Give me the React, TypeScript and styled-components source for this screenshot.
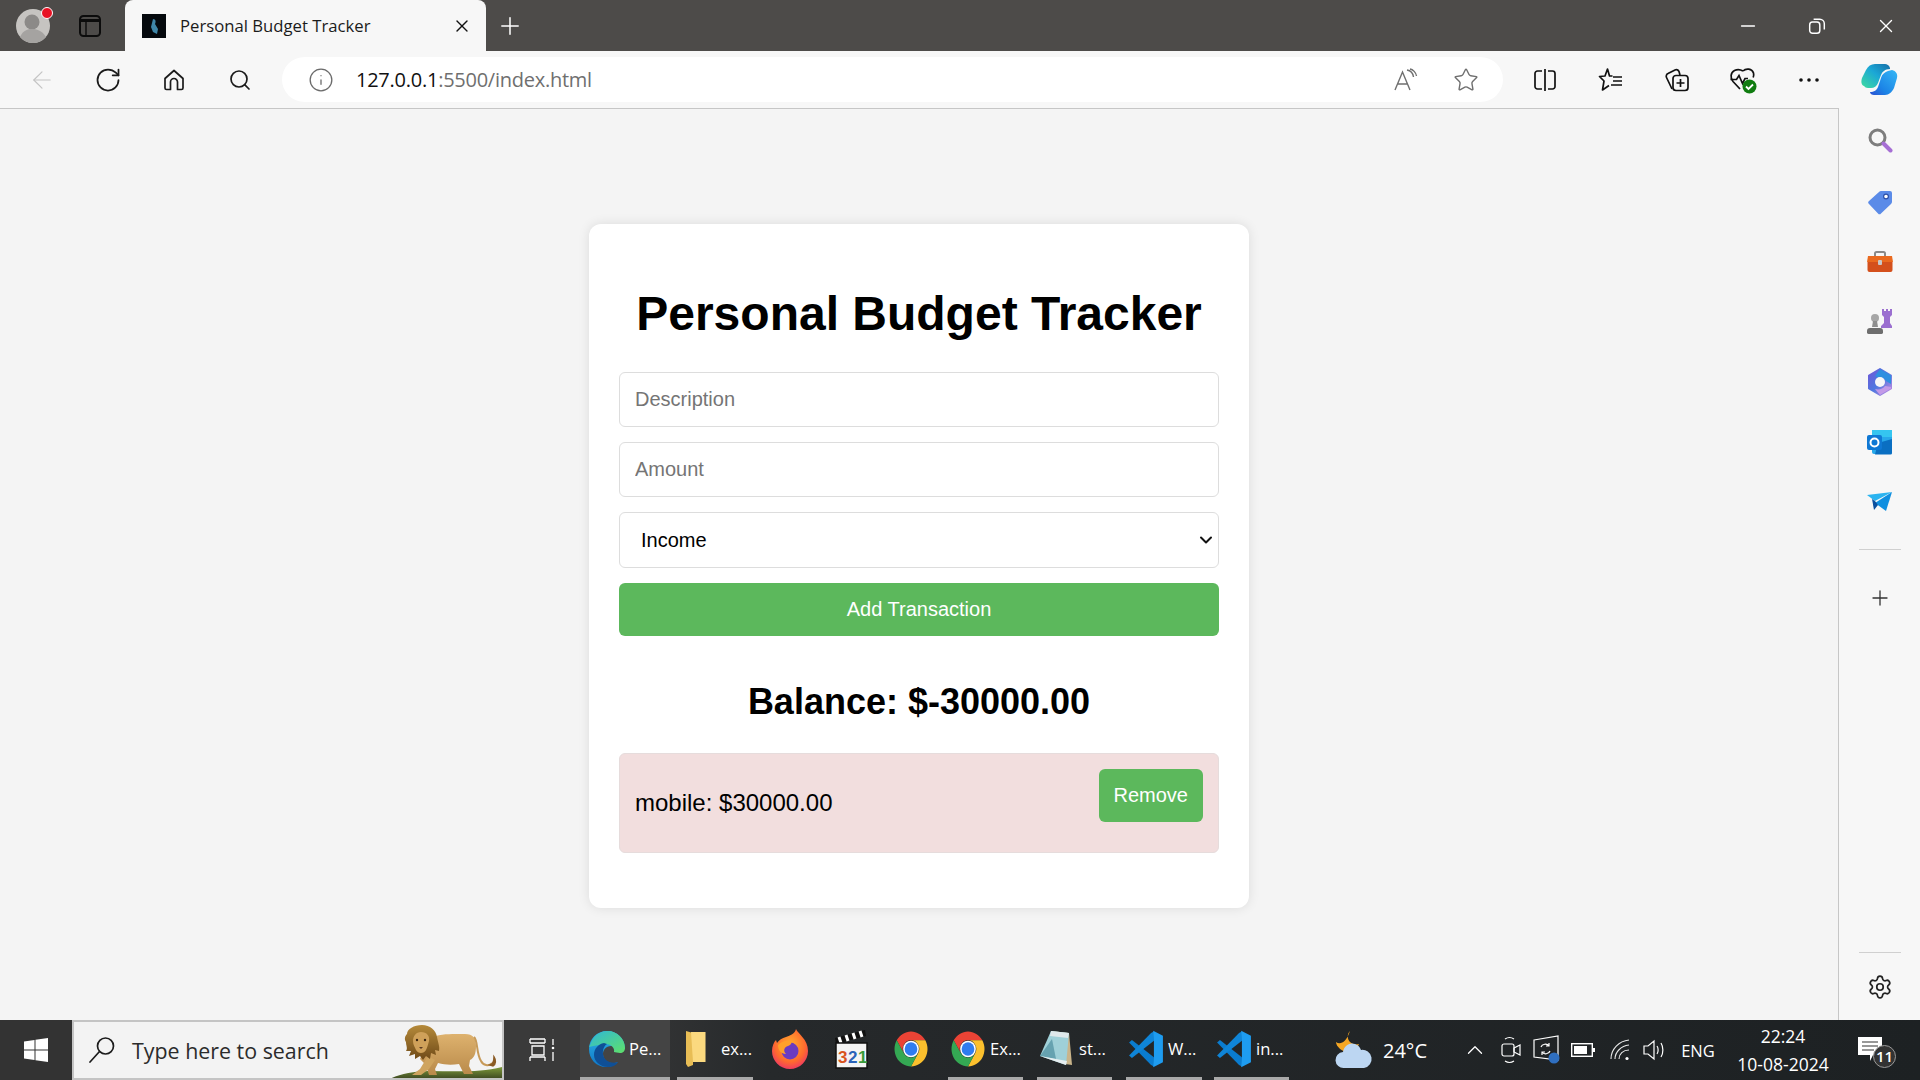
import styled, { createGlobalStyle } from 'styled-components';
import {
  ArrowLeft,
  ChevronDown,
  ChevronUp,
  Info,
  Minus,
  Plus,
  RotateCw,
  Search,
  Settings,
  Star,
  X,
} from 'lucide-react';

const uiFont = `"Open Sans", "Noto Sans", sans-serif`;

const GlobalStyle = createGlobalStyle`
  html, body {
    margin: 0;
    padding: 0;
    height: 100%;
    overflow: hidden;
    background: #f4f4f4;
    font-family: "Liberation Sans", Arial, sans-serif;
  }
`;

const Screen = styled.div`
  width: 1920px;
  height: 1080px;
  display: flex;
  flex-direction: column;
  overflow: hidden;
`;

/* browser tab strip */
const TabStrip = styled.div`
  height: 51px;
  flex: none;
  display: flex;
  align-items: center;
  background: #4d4b49;
`;

const AvatarSlot = styled.div`
  position: relative;
  width: 66px;
  display: flex;
  justify-content: center;
`;

const RedDot = styled.span`
  position: absolute;
  top: -1px;
  left: 41px;
  width: 10px;
  height: 10px;
  border-radius: 50%;
  background: #e81123;
  border: 1px solid #fff;
`;

const TabsButton = styled.div`
  width: 48px;
  margin-right: 11px;
  display: flex;
  justify-content: center;
`;

const Tab = styled.div`
  width: 361px;
  height: 51px;
  box-sizing: border-box;
  padding: 0 14px 0 17px;
  display: flex;
  align-items: center;
  background: #f7f7f7;
  border-radius: 8px 8px 0 0;
  color: #1b1b1b;
  font: 16.7px ${uiFont};
`;

const Favicon = styled.div`
  width: 24px;
  height: 24px;
  margin-right: 14px;
  flex: none;
`;

const TabTitle = styled.span`
  flex: 1;
  white-space: nowrap;
`;

const NewTab = styled.div`
  margin-left: 10px;
  display: flex;
  color: #fff;
`;

const WindowControls = styled.div`
  margin-left: auto;
  display: flex;
  color: #fff;
`;

const WindowButton = styled.div`
  width: 69px;
  display: flex;
  justify-content: center;
  align-items: center;
`;

/* address bar row */
const Toolbar = styled.div`
  height: 57px;
  flex: none;
  display: flex;
  align-items: center;
  padding-left: 9px;
  background: #f7f7f7;
`;

const ToolButton = styled.div<{ $w?: number }>`
  width: ${(p) => p.$w ?? 66}px;
  flex: none;
  display: flex;
  justify-content: center;
  align-items: center;
  color: #1b1b1b;
`;

const AddressBar = styled.div`
  width: 1221px;
  height: 45px;
  margin: 0 9px;
  flex: none;
  box-sizing: border-box;
  padding-left: 26px;
  display: flex;
  align-items: center;
  background: #fff;
  border-radius: 23px;
  color: #6b6b6b;
`;

const Url = styled.div`
  margin-left: 22px;
  font: 20px ${uiFont};
  letter-spacing: -0.25px;
  color: #6f6f6f;
  white-space: nowrap;
  b {
    font-weight: 400;
    color: #111;
  }
`;

const AddressActions = styled.div`
  margin-left: auto;
  margin-right: 24px;
  display: flex;
  align-items: center;
  gap: 34px;
  color: #6f6f6f;
`;

const Workspace = styled.div`
  flex: 1;
  display: flex;
  min-height: 0;
`;

const Viewport = styled.main`
  flex: 1;
  box-sizing: border-box;
  padding-top: 2px;
  display: flex;
  align-items: center;
  justify-content: center;
  background: #f4f4f4;
  border-top: 1px solid #c6c6c6;
  border-right: 1px solid #c6c6c6;
`;

const Sidebar = styled.aside`
  width: 81px;
  flex: none;
  padding-top: 4px;
  box-sizing: border-box;
  display: flex;
  flex-direction: column;
  align-items: center;
  background: #f7f7f7;
`;

const SideIcon = styled.div`
  width: 30px;
  height: 60px;
  display: flex;
  align-items: center;
  justify-content: center;
`;

const LensSlot = styled(SideIcon)`
  margin-top: -2px;
  margin-bottom: 2px;
`;

const SideRule = styled.hr<{ $auto?: boolean }>`
  width: 42px;
  margin: ${(p) => (p.$auto ? 'auto 0 0' : '17px 0 0')};
  border: 0;
  border-top: 1px solid #d0d0d0;
`;

const SideAdd = styled.div`
  margin-top: 36px;
  display: flex;
  color: #333;
`;

const SideSettings = styled.div`
  margin: 21px 0 20px;
  display: flex;
  color: #222;
`;

/* the page itself */
const Card = styled.section`
  width: 660px;
  box-sizing: border-box;
  padding: 30px;
  background: #fff;
  border-radius: 12px;
  box-shadow: 0 0 12px rgba(0, 0, 0, 0.1);
`;

const Title = styled.h1`
  margin: 32px 0 31px;
  font-size: 48px;
  font-weight: 700;
  text-align: center;
  color: #000;
`;

const TextInput = styled.input`
  display: block;
  width: 100%;
  box-sizing: border-box;
  margin-bottom: 15px;
  padding: 15px;
  border: 1px solid #ddd;
  border-radius: 6px;
  background: #fff;
  font: 20px "Liberation Sans", Arial, sans-serif;
  outline: none;
`;

const SelectWrap = styled.div`
  position: relative;
  margin-bottom: 15px;
  color: #111;
`;

const TypeSelect = styled.select`
  display: block;
  width: 100%;
  height: 56px;
  box-sizing: border-box;
  padding: 15px 15px 15px 21px;
  appearance: none;
  border: 1px solid #ddd;
  border-radius: 6px;
  background: #fff;
  color: #000;
  font: 20px "Liberation Sans", Arial, sans-serif;
`;

const SelectArrow = styled(ChevronDown)`
  position: absolute;
  top: 18px;
  right: 3px;
  pointer-events: none;
`;

const GreenButton = styled.button<{ $full?: boolean }>`
  display: block;
  width: ${(p) => (p.$full ? '100%' : 'auto')};
  flex: none;
  box-sizing: border-box;
  padding: 15px 20px;
  border: 0;
  border-radius: 6px;
  background: #5cb85c;
  color: #fff;
  font: 20px/23px "Liberation Sans", Arial, sans-serif;
  cursor: pointer;
`;

const RemoveButton = styled(GreenButton)`
  margin-bottom: 15px;
  padding: 15px;
`;

const Balance = styled.h2`
  margin: 45px 0 30px;
  font-size: 36px;
  font-weight: 700;
  text-align: center;
  color: #000;
`;

const TransactionList = styled.ul`
  margin: 0 0 25px;
  padding: 0;
  list-style: none;
`;

const TransactionRow = styled.li`
  display: flex;
  align-items: center;
  justify-content: space-between;
  padding: 15px;
  background: #f2dede;
  border: 1px solid #e6dcdc;
  border-radius: 6px;
  font-size: 24px;
  color: #000;
`;

/* windows taskbar */
const Taskbar = styled.footer`
  height: 60px;
  flex: none;
  display: flex;
  align-items: stretch;
  background: linear-gradient(90deg, #363636 0%, #3a3a3a 30%, #26292b 40%, #1d2123 100%);
  color: #fff;
  font: 20px ${uiFont};
`;

const StartButton = styled.div`
  width: 72px;
  flex: none;
  display: flex;
  align-items: center;
  justify-content: center;
  background: #333;
`;

const SearchBox = styled.div`
  position: relative;
  width: 432px;
  flex: none;
  box-sizing: border-box;
  padding-left: 14px;
  display: flex;
  align-items: center;
  gap: 16px;
  background: #f3f3f3;
  border: 2px solid #c4c4c4;
  color: #2b2b2b;
  font-size: 21.4px;
  overflow: hidden;
`;

const Lion = styled.svg`
  position: absolute;
  right: 0;
  bottom: -2px;
`;

const TaskView = styled.div`
  width: 76px;
  flex: none;
  display: flex;
  align-items: center;
  justify-content: center;
  background: #3a3a3a;
`;

const TaskApp = styled.div<{ $w: number; $gap?: number; $pad?: number; $open?: boolean; $active?: boolean }>`
  width: ${(p) => p.$w}px;
  margin-left: ${(p) => p.$gap ?? 0}px;
  flex: none;
  box-sizing: border-box;
  padding-left: ${(p) => p.$pad ?? 0}px;
  display: flex;
  align-items: center;
  justify-content: ${(p) => (p.$open ? 'flex-start' : 'center')};
  gap: 4px;
  background: ${(p) => (p.$active ? '#444' : 'transparent')};
  border-bottom: 3px solid ${(p) => (p.$open ? '#a9a9a9' : 'transparent')};
  font-size: 16.6px;
  white-space: nowrap;
  svg {
    flex: none;
  }
`;

const TaskLabel = styled.span<{ $indent?: number }>`
  margin-left: ${(p) => p.$indent ?? 0}px;
`;

const Tray = styled.div`
  margin-left: auto;
  display: flex;
  align-items: center;
  color: #fff;
`;

const TrayItem = styled.div<{ $w: number }>`
  width: ${(p) => p.$w}px;
  flex: none;
  display: flex;
  align-items: center;
  justify-content: center;
`;

const EngLabel = styled.span`
  font-size: 16.5px;
`;

const Weather = styled.div`
  width: 122px;
  display: flex;
  align-items: center;
  gap: 10px;
  font-size: 20px;
`;

const Clock = styled.div`
  width: 116px;
  text-align: center;
  font-size: 17.5px;
  line-height: 28px;
`;

const Notifications = styled.div`
  position: relative;
  width: 57px;
  display: flex;
  justify-content: center;
  margin-right: 22px;
`;

const NotifyBadge = styled.span`
  position: absolute;
  top: 8px;
  left: 32px;
  width: 23px;
  height: 23px;
  box-sizing: border-box;
  border-radius: 50%;
  background: #333;
  border: 1px solid #999;
  font-size: 15px;
  font-weight: 600;
  line-height: 21px;
  text-align: center;
`;

/* drawings */
const Avatar = () => (
  <svg width="36" height="36" viewBox="0 0 36 36">
    <circle cx="18" cy="18" r="17" fill="#c6c4c1" />
    <circle cx="17" cy="14" r="7.5" fill="#8c8a88" />
    <path d="M5 29c3-7 8-8 12-8s10 1 14 8a17 17 0 0 1-26 0z" fill="#a5a3a1" />
  </svg>
);

const TabsIcon = () => (
  <svg width="22" height="22" viewBox="0 0 22 22" fill="none" stroke="#0c0c0c" strokeWidth="2">
    <rect x="1" y="1" width="20" height="20" rx="3.5" />
    <path d="M1 5.500h20" strokeWidth="3" />
    <path d="M7 6v15" strokeWidth="1.400" />
  </svg>
);

const RestoreIcon = () => (
  <svg width="18" height="18" viewBox="0 0 16 16" fill="none" stroke="#fff" strokeWidth="1.300">
    <rect x="1.500" y="4.500" width="9" height="10" rx="2.500" />
    <path d="M5 2h5.500a4 4 0 0 1 4 4v5" />
  </svg>
);

const HomeIcon = () => (
  <svg width="24" height="24" viewBox="0 0 24 24" fill="none" stroke="#1b1b1b" strokeWidth="1.700">
    <path d="M3 10.500 12 2.500l9 8V20a1.500 1.500 0 0 1-1.500 1.500h-4V14a3.500 3.500 0 0 0-7 0v7.500h-4A1.500 1.500 0 0 1 3 20z" strokeLinejoin="round" />
  </svg>
);

const ReadAloudIcon = () => (
  <svg width="26" height="24" viewBox="0 0 26 24" fill="none" stroke="#6f6f6f" strokeWidth="1.400">
    <path d="M2 22 9.500 4 17 22M5 16h9" />
    <path d="M14 2c3 .5 6 3 6.500 7M17 1c3 .5 6 3.500 6.500 7" />
  </svg>
);

const SplitIcon = () => (
  <svg width="24" height="24" viewBox="0 0 24 24" fill="none" stroke="#111" strokeWidth="1.700">
    <path d="M9 3H4.500A2.500 2.500 0 0 0 2 5.500v13A2.500 2.500 0 0 0 4.500 21H9M15 3h4.500A2.500 2.500 0 0 1 22 5.500v13a2.500 2.500 0 0 1-2.500 2.500H15M12 1v22" />
  </svg>
);

const FavoritesIcon = () => (
  <svg width="26" height="26" viewBox="0 0 26 26" fill="none" stroke="#111" strokeWidth="1.700" strokeLinejoin="round">
    <path d="M14.500 9 11.500 9 9.500 2 7 9 1.500 9.500 6 14 4.500 23 11 18.500" />
    <path d="M15 10h9M15 14h9M13 18h11" />
  </svg>
);

const CollectionsIcon = () => (
  <svg width="26" height="26" viewBox="0 0 26 26" fill="none" stroke="#111" strokeWidth="1.700">
    <path d="M8 22 2.500 10.500a3 3 0 0 1 1.500-4L11 3a3 3 0 0 1 4 1.500L16 8" />
    <rect x="9" y="8.500" width="15" height="15" rx="3" />
    <path d="M16.500 12v8M12.500 16h8" />
  </svg>
);

const HealthIcon = () => (
  <svg width="28" height="28" viewBox="0 0 28 28" fill="none">
    <path d="M14 5c3-3 9-2.500 10.500 2 .4 1.500.3 3-.3 4.500M11 23 4 15.500C1 12 1.500 6.500 5.500 4.500 8.500 3 11.500 3.500 14 5" stroke="#111" strokeWidth="1.700" />
    <path d="M1.500 13.500h6l2.500-4 3.500 8 2.500-5h3" stroke="#111" strokeWidth="1.700" />
    <circle cx="20.500" cy="20.500" r="7" fill="#107c10" />
    <path d="m17 20.500 2.500 2.500 4.500-4.500" stroke="#fff" strokeWidth="1.800" />
  </svg>
);

const DotsIcon = () => (
  <svg width="20" height="4" viewBox="0 0 20 4" fill="#111">
    <circle cx="2" cy="2" r="1.800" />
    <circle cx="10" cy="2" r="1.800" />
    <circle cx="18" cy="2" r="1.800" />
  </svg>
);

const CopilotIcon = () => (
  <svg width="37" height="31" viewBox="0 0 37 31">
    <defs>
      <linearGradient id="copA" x1="0" y1="1" x2="1" y2="0">
        <stop offset="0" stopColor="#3fdc9e" />
        <stop offset="0.55" stopColor="#1ba7d6" />
        <stop offset="1" stopColor="#176fa8" />
      </linearGradient>
      <linearGradient id="copB" x1="1" y1="0" x2="0" y2="1">
        <stop offset="0" stopColor="#35b7f5" />
        <stop offset="0.65" stopColor="#1c84e6" />
        <stop offset="1" stopColor="#2b4fd1" />
      </linearGradient>
    </defs>
    <path d="M31 6c4 1 6 4 5 8l-3 10c-2 4-5 7-9 7H13c-2 0-4-1-4-3 4 0 7-2 8-5l3-9c1-4 4-6 7-7z" fill="url(#copB)" />
    <path d="M3 22C0 21 0 17 1 14l4-8c2-4 5-6 9-6h10c2 0 4 1 5 4v1c-5 0-8 3-9 6l-3 8c-1 3-4 5-7 5H7c-2 0-3-1-4-2z" fill="url(#copA)" />
  </svg>
);

const SideLens = () => (
  <svg width="26" height="26" viewBox="0 0 26 26" fill="none">
    <circle cx="10.500" cy="10.500" r="7.500" stroke="#7d7d7d" strokeWidth="3" />
    <path d="m16.500 16.500 7 7" stroke="#a66fd4" strokeWidth="4" strokeLinecap="round" />
  </svg>
);

const SideTag = () => (
  <svg width="26" height="26" viewBox="0 0 26 26">
    <path d="M14 2h9a2 2 0 0 1 2 2v9a3 3 0 0 1-1 2L14 24.500a2 2 0 0 1-3 0L2 15a2 2 0 0 1 0-3L12 3a3 3 0 0 1 2-1z" fill="#5b8be8" />
    <circle cx="19" cy="7.500" r="2.400" fill="#fff" stroke="#2c4fa8" strokeWidth="1.200" />
  </svg>
);

const SideToolbox = () => (
  <svg width="28" height="24" viewBox="0 0 28 24">
    <path d="M9 6V3.500A1.500 1.500 0 0 1 10.500 2h7A1.500 1.500 0 0 1 19 3.500V6" fill="none" stroke="#8a8a8a" strokeWidth="2" />
    <path d="M2 6h24l1 6H1z" fill="#ea6a1f" />
    <path d="M1.500 12h25v8a2 2 0 0 1-2 2h-21a2 2 0 0 1-2-2z" fill="#d4501c" />
    <rect x="12" y="10" width="4" height="5" rx="1" fill="#c8c8c8" />
  </svg>
);

const SideChess = () => (
  <svg width="28" height="28" viewBox="0 0 28 28">
    <path d="M16 1h2v2h2V1h2v2h2V1h2v6l-2 2v6l2 3v2H15v-2l3-3V9l-2-2z" fill="#9b6fd0" />
    <circle cx="9" cy="10" r="4" fill="#a6a6a6" />
    <path d="M7 13h4l1 6H6z" fill="#8f8f8f" />
    <path d="M4 20h10c2 0 3 1 3 3v2a2 2 0 0 1-2 1H3a2 2 0 0 1-2-1v-2c0-2 1-3 3-3z" fill="#6e6e6e" />
  </svg>
);

const SideOffice = () => (
  <svg width="26" height="28" viewBox="0 0 26 28">
    <defs>
      <linearGradient id="offA" x1="0" y1="0" x2="1" y2="1">
        <stop offset="0" stopColor="#6f58d8" />
        <stop offset="0.5" stopColor="#4f78e0" />
        <stop offset="1" stopColor="#c58ae0" />
      </linearGradient>
    </defs>
    <path d="M13 1 24 7.500v13L13 27 2 20.500v-13z" fill="url(#offA)" strokeLinejoin="round" stroke="url(#offA)" strokeWidth="2" />
    <path d="M13 1 24 7.500V16l-5-3c-1-3-4-4-7-3l-4-2z" fill="#2f8fe0" />
    <path d="M8 21c4 1 8 0 10-3l6 1v1.500L13 27z" fill="#c39ae8" />
    <circle cx="13" cy="14" r="5" fill="#f7f7f7" />
  </svg>
);

const SideOutlook = () => (
  <svg width="26" height="26" viewBox="0 0 26 26">
    <rect x="5" y="1" width="20" height="24" rx="2" fill="#28a8ea" />
    <rect x="5" y="1" width="20" height="7" fill="#35c5f0" />
    <path d="M11 14l14-4v14a1.500 1.500 0 0 1-1.500 1.500H8z" fill="#0a6fc2" />
    <rect x="0" y="6" width="15" height="15" rx="2" fill="#0f78d4" />
    <circle cx="7.500" cy="13.500" r="4" fill="none" stroke="#fff" strokeWidth="2" />
  </svg>
);

const SideSend = () => (
  <svg width="26" height="22" viewBox="0 0 26 22">
    <path d="M0 4 25 1 8 10z" fill="#2bb4f0" />
    <path d="M25 1 19 20 8 12z" fill="#0f8fe0" />
    <path d="M5 8l3 2 3 4-4 5z" fill="#0b4f9e" />
  </svg>
);

const WindowsLogo = () => (
  <svg width="24" height="24" viewBox="0 0 24 24" fill="#fff">
    <path d="M0 3.500 10.500 2v9.500H0zM11.500 1.800 24 0v11.500H11.500zM0 12.500h10.500V22L0 20.500zM11.500 12.500H24V24l-12.500-1.800z" />
  </svg>
);

const SearchGlass = () => (
  <svg width="28" height="28" viewBox="0 0 28 28" fill="none" stroke="#1c1c1c" strokeWidth="1.700">
    <circle cx="17.500" cy="10" r="8" />
    <path d="M11.500 15.500 2 26" strokeLinecap="round" />
  </svg>
);

const LionArt = () => (
  <Lion width="122" height="60" viewBox="0 0 122 60">
    <defs>
      <linearGradient id="lionBody" x1="0" y1="0" x2="0" y2="1">
        <stop offset="0" stopColor="#deb26e" />
        <stop offset="1" stopColor="#b98a4a" />
      </linearGradient>
      <linearGradient id="hill" x1="0" y1="0" x2="0" y2="1">
        <stop offset="0" stopColor="#7d9a3a" />
        <stop offset="1" stopColor="#37401f" />
      </linearGradient>
      <linearGradient id="mane" x1="0" y1="0" x2="0" y2="1">
        <stop offset="0" stopColor="#b58a3a" />
        <stop offset="1" stopColor="#6f4a18" />
      </linearGradient>
    </defs>
    <path d="M8 60c8-5 25-9 40-9 25 0 50 2 74-4v13z" fill="url(#hill)" />
    <path d="M50 18c10-5 25-4 35-4 8 0 11 4 11 12 0 8-2 12-6 14l-1 6 4 8h-9l-5-10c-7 1-14 1-21-1l-3 6 2 6h-8l-3-10-6-6z" fill="url(#lionBody)" />
    <path d="M48 36 40 49l-8 6h9l8-6 6-9z" fill="#cfa45f" />
    <path d="M94 17c4 3 2 16 7 24 2 4 8 6 11 2" fill="none" stroke="#c79a58" strokeWidth="2" />
    <path d="M110 45c3-1 4-4 4-8 2 3 2 7-1 9z" fill="#8a5a24" stroke="#8a5a24" strokeWidth="1.500" />
    <path d="M42 5c8 0 14 5 15 12 1 6 3 9 2 14l-4-1 1 5-5-2-1 6-4-3-3 4-3-4-5 3 0-5-6 2 2-5-5 0c2-3 0-5 0-9-2-3-1-6 1-8 0-5 7-9 15-9z" fill="url(#mane)" />
    <path d="M41 12c6 0 9 4 8 9-1 4-2 7-3 9-1 2-3 3-5 3s-4-1-5-3c-1-3-3-5-3-9 0-5 3-9 8-9z" fill="#cfa15a" />
    <circle cx="37" cy="20" r="1.200" fill="#3a2410" />
    <circle cx="45" cy="20" r="1.200" fill="#3a2410" />
    <path d="M39 27h4l-2 2z" fill="#5a3a22" />
  </Lion>
);

const TaskViewIcon = () => (
  <svg width="26" height="24" viewBox="0 0 26 24" fill="none" stroke="#fff" strokeWidth="1.300">
    <path d="M1 1h15M1 5h15M1 19h15M3 8h12v9H3zM24 1v6M24 14v9" />
    <circle cx="24" cy="10" r="1.300" fill="#fff" stroke="none" />
    <path d="M1 19v4M16 19v4M1 1v4M16 1v4" />
  </svg>
);

const EdgeIcon = () => (
  <svg width="36" height="38" viewBox="0 0 36 36">
    <defs>
      <linearGradient id="edgeA" x1="0" y1="0" x2="0" y2="1">
        <stop offset="0" stopColor="#2eb7e8" />
        <stop offset="1" stopColor="#1076c6" />
      </linearGradient>
      <linearGradient id="edgeB" x1="0" y1="0" x2="1" y2="1">
        <stop offset="0" stopColor="#2fb7d8" />
        <stop offset="1" stopColor="#5fe06a" />
      </linearGradient>
    </defs>
    <path d="M18 0C8 0 0 8 0 18c0 10 7 18 17 18 5 0 9-2 12-5-6 3-15 0-15-8 0-4 3-8 8-8 3 0 6 2 7 3h7V16C35 7 28 0 18 0z" fill="url(#edgeA)" />
    <path d="M2 12C5 4 12 0 19 0c9 0 17 8 17 17 0 3-2 5-5 5-2 0-5-1-6-1 1-4-3-8-8-8-6 0-11 2-17 3z" fill="url(#edgeB)" />
    <path d="M15 12c-6 1-10 6-10 12 0 6 6 12 14 12 4 0 8-1 10-5-5 2-14 0-15-8-.5-4 1-8 4-10z" fill="#0f4f96" />
  </svg>
);

const FolderIcon = () => (
  <svg width="22" height="38" viewBox="0 0 22 38">
    <path d="M1 1 8 3v32l-5 2-2-3z" fill="#e8bd55" />
    <path d="M6 2h15v30H8z" fill="#fbd97f" />
    <path d="M20 2h1v30h-1z" fill="#333" opacity=".5" />
  </svg>
);

const FirefoxIcon = () => (
  <svg width="36" height="40" viewBox="0 0 36 40">
    <defs>
      <radialGradient id="foxA" cx="0.5" cy="0.4" r="0.7">
        <stop offset="0" stopColor="#ffb02e" />
        <stop offset="0.6" stopColor="#ff6a2e" />
        <stop offset="1" stopColor="#e8247a" />
      </radialGradient>
    </defs>
    <path d="M24 0c2 5 12 10 12 22 0 10-8 18-18 18S0 32 0 22c0-5 2-9 4-11l1 3c2-3 5-5 9-6 3-1 9-3 10-8z" fill="url(#foxA)" />
    <circle cx="18" cy="22" r="8.500" fill="#6b3bc0" />
    <path d="M6 16c3-3 8-5 12-4 3 1 1 4-2 5-4 1-5 5-2 8-5 0-8-4-8-9z" fill="#ffa02a" />
  </svg>
);

const ClapperIcon = () => (
  <svg width="34" height="40" viewBox="0 0 34 40">
    <path d="M1 9 31 1l1 6L2 15z" fill="#111" />
    <path d="M5 8l2 6M12 6l2 6M19 4l2 6M26 2l2 6" stroke="#fff" strokeWidth="3" />
    <rect x="2" y="14" width="31" height="25" fill="#f4f4f4" stroke="#111" strokeWidth="1.500" />
    <text x="4" y="34" fontFamily="Liberation Sans" fontWeight="700" fontSize="17" fill="#d9541e">3</text>
    <text x="14" y="34" fontFamily="Liberation Sans" fontWeight="700" fontSize="17" fill="#2a62b8">2</text>
    <text x="24" y="34" fontFamily="Liberation Sans" fontWeight="700" fontSize="17" fill="#3a9a3a">1</text>
  </svg>
);

const ChromeIcon = () => (
  <svg width="36" height="38" viewBox="0 0 48 48" preserveAspectRatio="none">
    <path d="M43.050 13A22 22 0 0 0 4.950 13L14.470 29.500A11 11 0 0 1 24 13z" fill="#ea4335" />
    <path d="M43.050 13A22 22 0 0 1 24 46L33.530 29.500A11 11 0 0 0 24 13z" fill="#fbc02d" />
    <path d="M24 46A22 22 0 0 1 4.950 13L14.470 29.500A11 11 0 0 0 33.530 29.500z" fill="#34a853" />
    <circle cx="24" cy="24" r="10.500" fill="#fff" />
    <circle cx="24" cy="24" r="8.500" fill="#2f7cf0" />
  </svg>
);

const NotepadIcon = () => (
  <svg width="34" height="38" viewBox="0 0 34 38">
    <path d="M12 1 30 3l3 32-7-1z" fill="#c9b48a" />
    <path d="M12 1 30 3l-3 32L1 26z" fill="#9fd0d8" />
    <path d="M12 1 30 3l-1 5L11 6z" fill="#dfe8ea" />
    <path d="M1 26 13 9l4 20z" fill="#4f8f9f" opacity=".7" />
    <path d="M1 26l26 9 1-4z" fill="#e6eef0" />
  </svg>
);

const VsCodeIcon = () => (
  <svg width="36" height="38" viewBox="0 0 100 100" preserveAspectRatio="none">
    <path d="M3 33 11 26 72 72V96L64 92z" fill="#0a7ccf" />
    <path d="M3 67 11 74 72 28V4L64 8z" fill="#0f85d8" />
    <path d="M70 2 97 15V85L70 98 72 72V28z" fill="#1e9cf0" />
  </svg>
);

const CloudIcon = () => (
  <svg width="38" height="38" viewBox="0 0 38 38">
    <path d="M15 0c-3 3-3 8 0 11 2 2 6 3 9 2-2 5-6 8-11 8S1 16 1 11c4 3 10 1 14-11z" fill="#f5a623" />
    <path d="M9 37a8 8 0 0 1-1-16c1-6 6-10 12-8 3 1 5 3 6 6a9 9 0 0 1 3 18z" fill="#bcd6f2" />
  </svg>
);

const CameraIcon = () => (
  <svg width="20" height="28" viewBox="0 0 20 28" fill="none" stroke="#fff" strokeWidth="1.200">
    <rect x="1" y="8" width="12" height="12" rx="2" />
    <path d="m13 12 6-3v10l-6-3zM4 3c3-2 6-2 9 0M4 25c3 2 6 2 9 0" />
  </svg>
);

const SyncIcon = () => (
  <svg width="28" height="30" viewBox="0 0 28 30" fill="none" stroke="#fff" strokeWidth="1.200">
    <path d="M1 5 25 1v24L1 22z" />
    <path d="M8 12c1-3 6-4 8-1M16 8v3h-3M17 16c-1 3-6 4-8 1M9 20v-3h3" />
    <circle cx="21" cy="23" r="5.500" fill="#2f6fc0" stroke="none" />
  </svg>
);

const BatteryIcon = () => (
  <svg width="24" height="14" viewBox="0 0 24 14">
    <rect x="0.700" y="0.700" width="20.600" height="12.600" fill="none" stroke="#fff" strokeWidth="1.400" />
    <rect x="3" y="3" width="13" height="8" fill="#fff" />
    <rect x="22" y="5" width="2" height="4" fill="#fff" />
  </svg>
);

const WifiIcon = () => (
  <svg width="20" height="22" viewBox="0 0 20 22" fill="none" stroke="#fff" strokeWidth="1.100">
    <path d="M1 20C1 10 9 2 19 1M5 20c0-7 6-13 14-14M9 20c0-5 4-9 10-9" opacity=".9" />
    <circle cx="17" cy="19.500" r="1.600" fill="#fff" stroke="none" />
  </svg>
);

const VolumeIcon = () => (
  <svg width="24" height="22" viewBox="0 0 24 22" fill="none" stroke="#fff" strokeWidth="1.200">
    <path d="M1 7h4l6-5v18l-6-5H1zM14 7c1.500 2 1.500 6 0 8M18 4c2.500 4 2.500 10 0 14" />
  </svg>
);

const NotifyIcon = () => (
  <svg width="24" height="26" viewBox="0 0 24 26">
    <path d="M0 0h24v18h-9l-3 6v-6H0z" fill="#fff" />
    <path d="M4 5h16M4 9h16M4 13h12" stroke="#333" strokeWidth="1.200" />
  </svg>
);

const App = () => {
  return (
    <Screen>
      <GlobalStyle />
      <TabStrip>
        <AvatarSlot>
          <Avatar />
          <RedDot />
        </AvatarSlot>
        <TabsButton>
          <TabsIcon />
        </TabsButton>
        <Tab>
          <Favicon>
            <svg width="24" height="24" viewBox="0 0 24 24">
              <rect width="24" height="24" fill="#05090d" />
              <path d="M11 5c3 0 3 3 2 5l3 5-1 5-4-2-2-5 1-4z" fill="#3f86a8" />
            </svg>
          </Favicon>
          <TabTitle>Personal Budget Tracker</TabTitle>
          <X size={20} strokeWidth={1.6} color="#111" />
        </Tab>
        <NewTab>
          <Plus size={28} strokeWidth={1.3} />
        </NewTab>
        <WindowControls>
          <WindowButton>
            <Minus size={22} strokeWidth={1.5} />
          </WindowButton>
          <WindowButton>
            <RestoreIcon />
          </WindowButton>
          <WindowButton>
            <X size={22} strokeWidth={1.5} />
          </WindowButton>
        </WindowControls>
      </TabStrip>

      <Toolbar>
        <ToolButton>
          <ArrowLeft size={28} strokeWidth={1} color="#c4c4c4" />
        </ToolButton>
        <ToolButton>
          <RotateCw size={28} strokeWidth={1.5} />
        </ToolButton>
        <ToolButton>
          <HomeIcon />
        </ToolButton>
        <ToolButton>
          <Search size={24} strokeWidth={1.7} />
        </ToolButton>
        <AddressBar>
          <Info size={26} strokeWidth={1.2} />
          <Url>
            <b>127.0.0.1</b>:5500/index.html
          </Url>
          <AddressActions>
            <ReadAloudIcon />
            <Star size={26} strokeWidth={1.3} />
          </AddressActions>
        </AddressBar>
        <ToolButton>
          <SplitIcon />
        </ToolButton>
        <ToolButton>
          <FavoritesIcon />
        </ToolButton>
        <ToolButton>
          <CollectionsIcon />
        </ToolButton>
        <ToolButton>
          <HealthIcon />
        </ToolButton>
        <ToolButton $w={65}>
          <DotsIcon />
        </ToolButton>
        <ToolButton $w={76}>
          <CopilotIcon />
        </ToolButton>
      </Toolbar>

      <Workspace>
        <Viewport>
          <Card>
            <Title>Personal Budget Tracker</Title>
            <TextInput type="text" placeholder="Description" />
            <TextInput type="number" placeholder="Amount" />
            <SelectWrap>
              <TypeSelect defaultValue="income">
                <option value="income">Income</option>
                <option value="expense">Expense</option>
              </TypeSelect>
              <SelectArrow size={20} strokeWidth={2.4} />
            </SelectWrap>
            <GreenButton $full>Add Transaction</GreenButton>
            <Balance>Balance: $-30000.00</Balance>
            <TransactionList>
              <TransactionRow>
                <span>mobile: $30000.00</span>
                <RemoveButton>Remove</RemoveButton>
              </TransactionRow>
            </TransactionList>
          </Card>
        </Viewport>
        <Sidebar>
          <LensSlot><SideLens /></LensSlot>
          <SideIcon><SideTag /></SideIcon>
          <SideIcon><SideToolbox /></SideIcon>
          <SideIcon><SideChess /></SideIcon>
          <SideIcon><SideOffice /></SideIcon>
          <SideIcon><SideOutlook /></SideIcon>
          <SideIcon><SideSend /></SideIcon>
          <SideRule />
          <SideAdd>
            <Plus size={24} strokeWidth={1.3} />
          </SideAdd>
          <SideRule $auto />
          <SideSettings>
            <Settings size={26} strokeWidth={1.6} />
          </SideSettings>
        </Sidebar>
      </Workspace>

      <Taskbar>
        <StartButton>
          <WindowsLogo />
        </StartButton>
        <SearchBox>
          <SearchGlass />
          <span>Type here to search</span>
          <LionArt />
        </SearchBox>
        <TaskView>
          <TaskViewIcon />
        </TaskView>
        <TaskApp $w={90} $pad={9} $open $active>
          <EdgeIcon />
          <TaskLabel>Pe...</TaskLabel>
        </TaskApp>
        <TaskApp $w={76} $gap={7} $pad={8} $open>
          <FolderIcon />
          <TaskLabel $indent={10}>ex...</TaskLabel>
        </TaskApp>
        <TaskApp $w={60} $gap={7}><FirefoxIcon /></TaskApp>
        <TaskApp $w={62}><ClapperIcon /></TaskApp>
        <TaskApp $w={58}><ChromeIcon /></TaskApp>
        <TaskApp $w={75} $gap={8} $pad={2} $open>
          <ChromeIcon />
          <TaskLabel>Ex...</TaskLabel>
        </TaskApp>
        <TaskApp $w={75} $gap={14} $pad={2} $open>
          <NotepadIcon />
          <TaskLabel $indent={2}>st...</TaskLabel>
        </TaskApp>
        <TaskApp $w={76} $gap={14} $pad={2} $open>
          <VsCodeIcon />
          <TaskLabel>W...</TaskLabel>
        </TaskApp>
        <TaskApp $w={75} $gap={12} $pad={2} $open>
          <VsCodeIcon />
          <TaskLabel>in...</TaskLabel>
        </TaskApp>
        <Tray>
          <Weather>
            <CloudIcon />
            <span>24°C</span>
          </Weather>
          <TrayItem $w={36}><ChevronUp size={26} strokeWidth={1.2} /></TrayItem>
          <TrayItem $w={36}><CameraIcon /></TrayItem>
          <TrayItem $w={36}><SyncIcon /></TrayItem>
          <TrayItem $w={36}><BatteryIcon /></TrayItem>
          <TrayItem $w={38}><WifiIcon /></TrayItem>
          <TrayItem $w={32}><VolumeIcon /></TrayItem>
          <TrayItem $w={54}><EngLabel>ENG</EngLabel></TrayItem>
          <Clock>
            22:24
            <br />
            10-08-2024
          </Clock>
          <Notifications>
            <NotifyIcon />
            <NotifyBadge>11</NotifyBadge>
          </Notifications>
        </Tray>
      </Taskbar>
    </Screen>
  );
};

export default App;
